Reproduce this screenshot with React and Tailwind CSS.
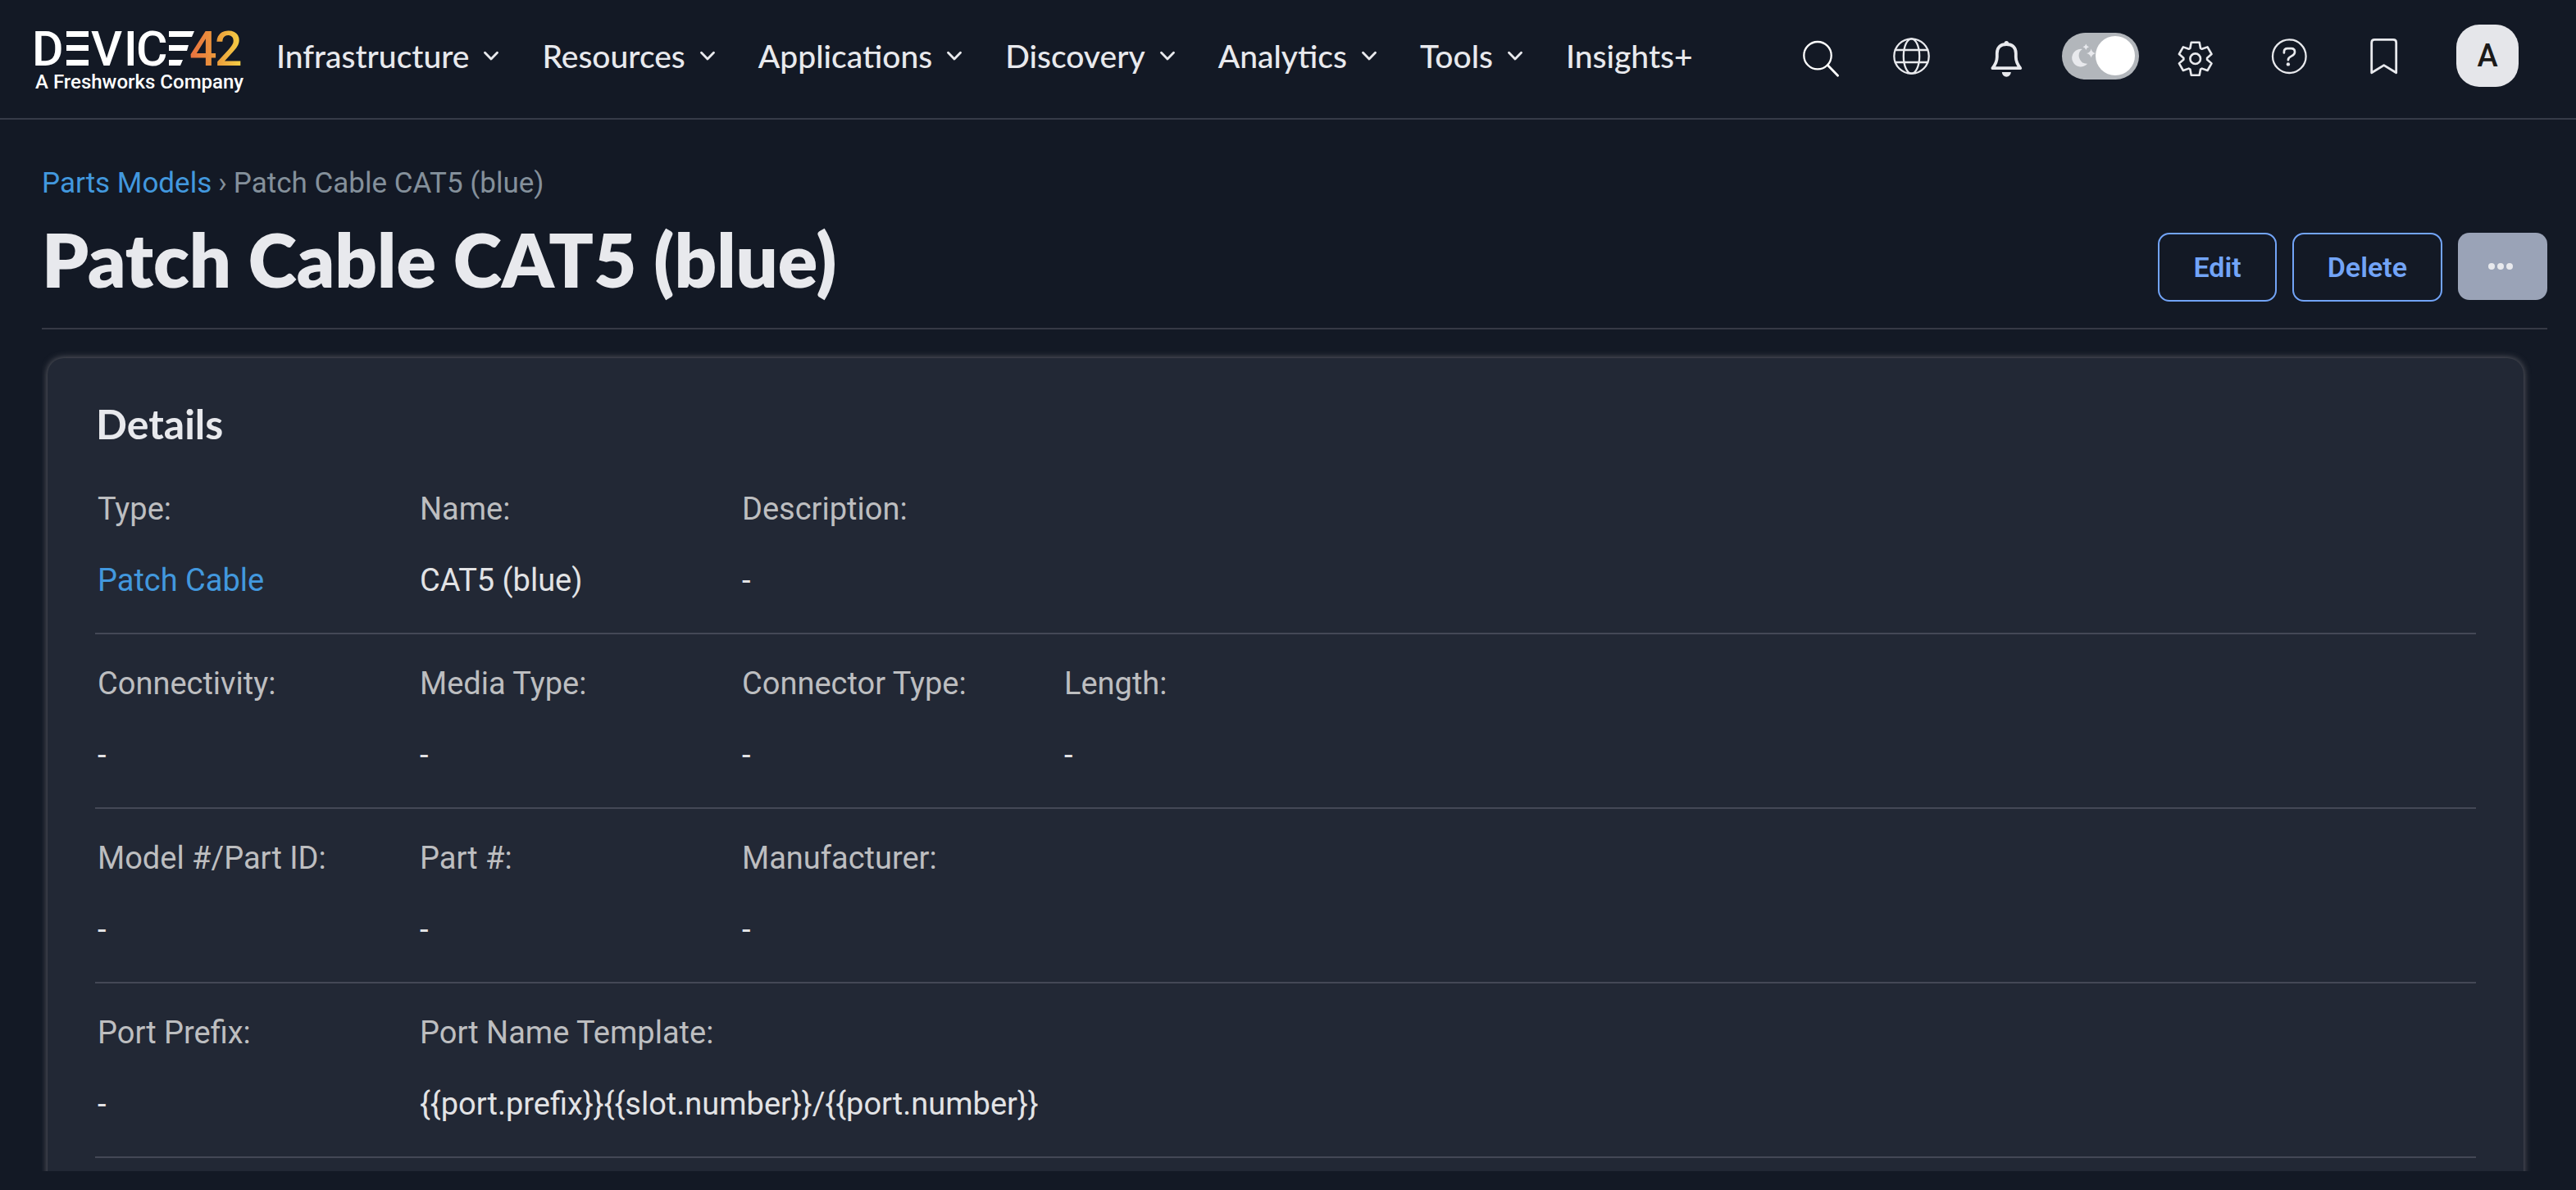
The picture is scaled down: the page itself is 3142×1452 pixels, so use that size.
import React from "react";

const NAV = ["Infrastructure", "Resources", "Applications", "Discovery", "Analytics", "Tools", "Insights+"];

const ROWS = [
  [
    { label: "Type:", value: "Patch Cable", link: true },
    { label: "Name:", value: "CAT5 (blue)" },
    { label: "Description:", value: "-" },
  ],
  [
    { label: "Connectivity:", value: "-" },
    { label: "Media Type:", value: "-" },
    { label: "Connector Type:", value: "-" },
    { label: "Length:", value: "-" },
  ],
  [
    { label: "Model #/Part ID:", value: "-" },
    { label: "Part #:", value: "-" },
    { label: "Manufacturer:", value: "-" },
  ],
  [
    { label: "Port Prefix:", value: "-" },
    { label: "Port Name Template:", value: "{{port.prefix}}{{slot.number}}/{{port.number}}" },
  ],
];

function Logo() {
  return (
    <svg className="block h-[84px] w-[250px] shrink-0 overflow-visible" viewBox="0 0 250 84">
      <defs>
        <linearGradient id="brand" gradientUnits="userSpaceOnUse" x1="192" y1="0" x2="250" y2="0">
          <stop offset="0" stopColor="#e8743f" />
          <stop offset="0.5" stopColor="#eb9a3b" />
          <stop offset="1" stopColor="#f5cf45" />
        </linearGradient>
      </defs>
      <g fill="#ffffff" fontFamily="Roboto, sans-serif" fontWeight="500" fontSize="59">
        <text x="-4" y="54">D</text>
        <text x="68" y="54">V</text>
        <text x="108" y="54">I</text>
        <text x="123" y="54">C</text>
      </g>
      <g fill="#ffffff">
        <path d="M38 12h27v7h-27zM38 29h27v7h-27zM38 47h27v7h-27z" />
        <path d="M163 12h31l-3 7h-28zM163 29h24l-2 7h-22zM163 47h17l-3 7h-14z" />
      </g>
      <text x="188" y="54" fill="url(#brand)" fontFamily="Roboto, sans-serif" fontWeight="500" fontSize="59">
        4
      </text>
      <text x="219" y="54" fill="url(#brand)" fontFamily="Roboto, sans-serif" fontWeight="500" fontSize="59">
        2
      </text>
      <text x="0" y="82" fill="#ffffff" fontFamily="Roboto, sans-serif" fontWeight="500" fontSize="24">
        A Freshworks Company
      </text>
    </svg>
  );
}

function Icon({ children }) {
  return (
    <svg
      className="block size-[50px] overflow-visible"
      viewBox="0 -1 50 50"
      fill="none"
      stroke="currentColor"
      strokeWidth="2.3"
      strokeLinejoin="round"
      strokeLinecap="round"
      aria-hidden="true"
    >
      {children}
    </svg>
  );
}

const gearPoints = [0, 60, 120, 180, 240, 300]
  .flatMap((a) => [
    [a - 26, 14.4],
    [a - 14, 20.6],
    [a + 14, 20.6],
    [a + 26, 14.4],
  ])
  .map(([deg, r]) => {
    const t = (deg * Math.PI) / 180;
    return `${(25.7 + r * Math.sin(t)).toFixed(2)},${(27.7 - r * Math.cos(t)).toFixed(2)}`;
  })
  .join(" ");

const SearchIcon = () => (
  <Icon>
    <g stroke="#ffffff">
      <circle cx="25" cy="23.7" r="16.7" />
      <path d="M37.3 35.5 49.6 48.2" strokeWidth="2.8" />
    </g>
  </Icon>
);

const GlobeIcon = () => (
  <Icon>
    <circle cx="24.5" cy="24.5" r="21.2" />
    <ellipse cx="24.5" cy="24.5" rx="9.7" ry="21.2" />
    <path d="M4.8 17h39.4M4.8 32h39.4" />
  </Icon>
);

const BellIcon = () => (
  <Icon>
    <path
      strokeWidth="3.8"
      d="M8.4 39.2C12 34.5 13.8 31 13.8 25.5V21C13.8 13.6 18.4 10 25.3 10S36.8 13.6 36.8 21v4.5c0 5.5 1.8 9 5.4 13.7Z"
    />
    <circle cx="25.3" cy="8.6" r="2.7" fill="currentColor" stroke="none" />
    <path d="M19.8 44h11a5.5 5.7 0 0 1-11 0z" fill="currentColor" stroke="none" />
  </Icon>
);

const GearIcon = () => (
  <Icon>
    <polygon points={gearPoints} strokeWidth="2.6" />
    <circle cx="25.7" cy="27.7" r="6.3" strokeWidth="2.6" />
  </Icon>
);

const HelpIcon = () => (
  <Icon>
    <circle cx="25.3" cy="24.7" r="20.3" />
    <path
      strokeWidth="2.7"
      d="M18.9 20.5V19.4q0-4.2 4.2-4.2h4.6q4.3 0 4.3 4.2c0 3-2.3 4.2-4.3 5.2q-3.8 1.8-3.8 4.6"
    />
    <circle cx="23.9" cy="34.4" r="2.2" fill="currentColor" stroke="none" />
  </Icon>
);

const BookmarkIcon = () => (
  <Icon>
    <path strokeWidth="2.8" d="M10.7 44.8V8q0-3.6 3.6-3.6h22.8q3.6 0 3.6 3.6v36.8L25.7 35.6Z" />
  </Icon>
);

function IconButton({ label, children }) {
  return (
    <button type="button" aria-label={label} className="flex w-[115px] items-center justify-center">
      {children}
    </button>
  );
}

function ThemeSwitch() {
  return (
    <div className="flex w-[115px] items-center justify-center">
      <label className="relative block h-[57px] w-[94px] cursor-pointer rounded-full bg-[#b2b6bb]">
        <input
          type="checkbox"
          role="switch"
          aria-label="Dark mode"
          defaultChecked
          className="absolute inset-0 size-full cursor-pointer appearance-none rounded-full"
        />
        <svg className="block h-[57px] w-[94px]" viewBox="0 0 94 57" fill="#e8e9ed" aria-hidden="true">
          <path d="M24.8 20A10.8 10.8 0 1 0 31.2 37.7A9.8 9.8 0 0 1 24.8 20Z" />
          <path d="M29.3 13.5q.7 3.1 3.8 3.8q-3.1.7-3.8 3.8q-.7-3.1-3.8-3.8q3.1-.7 3.8-3.8Z" />
          <path d="M35.6 19.4q1 4.6 5.6 5.6q-4.6 1-5.6 5.6q-1-4.600-5.600-5.600q4.600-1 5.600-5.600Z" />
        </svg>
        <span className="absolute top-1 right-[5px] size-12 rounded-full bg-white" />
      </label>
    </div>
  );
}

function Header() {
  return (
    <header className="flex min-h-[146px] shrink-0 items-center border-b-2 border-[#363b48] pr-[70px] pb-2 pl-[43px]">
      <a href="#home" aria-label="Device42 home" className="shrink-0">
        <Logo />
      </a>
      <nav className="ml-11 flex items-center gap-[53px] font-['Lato',sans-serif] text-[39px] leading-12 font-medium">
        {NAV.map((item) =>
          item === "Insights+" ? (
            <a key={item} href="#insights">
              {item}
            </a>
          ) : (
            <button key={item} type="button" aria-haspopup="menu" className="flex items-center gap-[18px]">
              {item}
              <svg
                className="block h-3 w-[18px]"
                viewBox="0 0 18 12"
                fill="none"
                stroke="currentColor"
                strokeWidth="2.8"
                strokeLinecap="round"
                strokeLinejoin="round"
                aria-hidden="true"
              >
                <path d="M1.5 2.2 9 10l7.5-7.8" />
              </svg>
            </button>
          ),
        )}
      </nav>
      <div className="ml-auto flex items-center">
        <IconButton label="Search"><SearchIcon /></IconButton>
        <IconButton label="Language"><GlobeIcon /></IconButton>
        <IconButton label="Notifications"><BellIcon /></IconButton>
        <ThemeSwitch />
        <IconButton label="Settings"><GearIcon /></IconButton>
        <IconButton label="Help"><HelpIcon /></IconButton>
        <IconButton label="Bookmarks"><BookmarkIcon /></IconButton>
        <button
          type="button"
          aria-label="Account"
          className="ml-8 size-[76px] rounded-[28px] bg-[#e5e6ea] text-[38px] font-medium text-[#1b1a19]"
        >
          A
        </button>
      </div>
    </header>
  );
}

function Field({ label, value, link }) {
  return (
    <div className="w-[393px] shrink-0 pl-[3px] whitespace-nowrap">
      <dt className="text-[#bdbec0]">{label}</dt>
      <dd className="mt-[43px] text-[#e2e3e5]">
        {link ? (
          <a href="#patch-cable" className="text-[#4298de]">
            {value}
          </a>
        ) : (
          value
        )}
      </dd>
    </div>
  );
}

export default function App() {
  return (
    <div className="flex h-screen flex-col bg-[#131925] font-['Roboto',sans-serif] text-[#e8e9ed]">
      <Header />
      <main className="flex min-h-0 flex-1 flex-col pr-[35px] pb-[23px] pl-[51px]">
        <div className="shrink-0 border-b-2 border-[#363945] pt-[58px] pb-[30px]">
          <nav aria-label="Breadcrumb" className="flex gap-2 text-[35px] leading-10 text-[#84909b]">
            <a href="#parts-models" className="text-[#4298de]">
              Parts Models
            </a>
            <span aria-hidden="true">›</span>
            <span>Patch Cable CAT5 (blue)</span>
          </nav>
          <div className="mt-[18px] flex items-end justify-between">
            <h1 className="font-['Lato',sans-serif] text-[90px] leading-[108px] font-extrabold">
              Patch Cable CAT5 (blue)
            </h1>
            <div className="flex items-start gap-[19px] pb-0.5 text-[34px] font-semibold">
              <button type="button" className="h-[84px] rounded-[14px] border-2 border-[#72a4f7] px-[41px] text-[#72a4f7]">
                Edit
              </button>
              <button type="button" className="h-[84px] rounded-[14px] border-2 border-[#72a4f7] px-[41px] text-[#72a4f7]">
                Delete
              </button>
              <button
                type="button"
                aria-label="More actions"
                className="flex h-[82px] w-[109px] items-center justify-center gap-[3px] rounded-[14px] bg-[#9aa3b7] pr-1.5"
              >
                <span className="size-2 rounded-full bg-[#e8e9ed]" />
                <span className="size-2 rounded-full bg-[#e8e9ed]" />
                <span className="size-2 rounded-full bg-[#e8e9ed]" />
              </button>
            </div>
          </div>
        </div>
        <div className="min-h-0 flex-1 overflow-hidden pt-[35px] pr-[29px] pl-[7px]">
          <section className="rounded-[20px] bg-[#222835] px-[58px] pt-[50px] pb-[58px] shadow-[0_0_8px_0_#6a6a70]">
            <h2 className="pl-px font-['Lato',sans-serif] text-[50px] leading-[60px] font-bold">Details</h2>
            <div className="mt-3.5">
              {ROWS.map((row) => (
                <dl
                  key={row[0].label}
                  className="flex border-b-2 border-[#444856] pt-[38px] pb-[42px] text-[38px] leading-[44px]"
                >
                  {row.map((f) => (
                    <Field key={f.label} {...f} />
                  ))}
                </dl>
              ))}
            </div>
          </section>
        </div>
      </main>
    </div>
  );
}
